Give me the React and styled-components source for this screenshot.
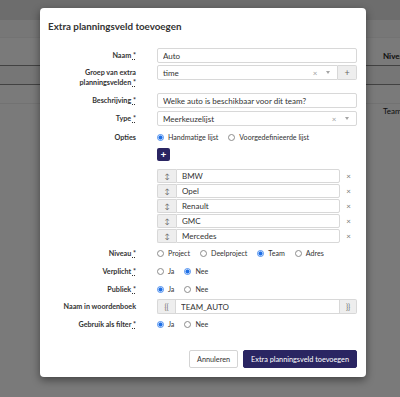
import React from 'react';
import styled, { createGlobalStyle } from 'styled-components';

const GlobalStyle = createGlobalStyle`
  html, body { margin: 0; padding: 0; }
  body {
    font-family: Lato, "Noto Sans", sans-serif;
    background: #fff;
    color: #333;
    width: 400px;
    height: 397px;
    overflow: hidden;
  }
  * { box-sizing: border-box; }
`;

const Page = styled.div`
  position: relative;
  width: 400px;
  height: 397px;
  overflow: hidden;
  background: #fff;
`;

const TopBar = styled.div`
  height: 20px;
  background: #e4e4e4;
`;

const BgRow = styled.div`
  display: grid;
  grid-template-columns: 383px 1fr;
  align-items: ${p => (p.$bottom ? 'end' : 'center')};
  padding-bottom: ${p => (p.$bottom ? 4 : 0)}px;
  height: ${p => p.$h}px;
  border-bottom: 1px solid ${p => p.$line};
  background: ${p => p.$bg || '#fff'};
  font-size: 8px;
  line-height: 10px;
  font-weight: ${p => (p.$bold ? 700 : 400)};
  color: #222;
  white-space: nowrap;
`;

const Backdrop = styled.div`
  position: absolute;
  inset: 0;
  background: rgba(0, 0, 0, 0.52);
`;

const Modal = styled.div`
  position: absolute;
  left: 40px;
  top: 8px;
  width: 326px;
  height: 369px;
  background: #fff;
  border-radius: 4px;
  box-shadow: 0 3px 9px rgba(0, 0, 0, 0.45);
  display: flex;
  flex-direction: column;
  padding: 0 9px 9px 8px;
`;

const Title = styled.h4`
  margin: 10px 0 14px;
  height: 16px;
  line-height: 16px;
  font-size: 9.8px;
  font-weight: 700;
  color: #333;
`;

const Form = styled.div`
  display: flex;
  flex-direction: column;
`;

const Row = styled.div`
  display: grid;
  grid-template-columns: 88px 200px;
  column-gap: 21px;
  align-items: start;
  margin-bottom: ${p => (p.$mb ?? 3)}px;
`;

const Label = styled.div`
  text-align: right;
  font-weight: 700;
  font-size: 7.2px;
  line-height: 10px;
  padding-top: ${p => (p.$pt ?? 2.5)}px;
  color: #333;
`;

const Req = styled.abbr`
  text-decoration: underline dotted;
  text-underline-offset: 1px;
  cursor: help;
`;

const Control = styled.div`
  display: flex;
  align-items: center;
  min-height: 15px;
  grid-column: 2;
`;

const TextInput = styled.input`
  height: ${p => (p.$h ?? 15)}px;
  width: 100%;
  flex: 1;
  min-width: 0;
  border: 1px solid #d8d8d8;
  border-radius: ${p => p.$radius ?? '2px'};
  padding: 0 5px;
  font-family: Lato, "Noto Sans", sans-serif;
  font-size: 8px;
  color: #333;
  background: #fff;
  outline: none;
`;

const SelectBox = styled.div`
  flex: 1;
  display: flex;
  align-items: center;
  height: 15px;
  border: 1px solid #d8d8d8;
  border-radius: ${p => (p.$joined ? '2px 0 0 2px' : '2px')};
  padding: 0 5px;
  font-size: 8px;
  color: #333;
`;

const SelectValue = styled.span`
  flex: 1;
`;

const Clear = styled.span`
  width: 8px;
  text-align: center;
  color: #a0a0a0;
  font-size: 8px;
  margin-right: 5px;
`;

const Caret = styled.span`
  width: 8px;
  display: flex;
  justify-content: center;
  &::after {
    content: '';
    border-top: 3px solid #a5a5a5;
    border-left: 2.5px solid transparent;
    border-right: 2.5px solid transparent;
  }
`;

const Addon = styled.div`
  width: ${p => p.$w}px;
  height: ${p => (p.$h ?? 15)}px;
  flex: none;
  display: flex;
  align-items: center;
  justify-content: center;
  background: #eeeeee;
  border: 1px solid #d8d8d8;
  ${p => (p.$side === 'left' ? 'border-right: none; border-radius: 2px 0 0 2px;' : 'border-left: none; border-radius: 0 2px 2px 0;')}
  color: #666;
  font-size: ${p => p.$fs ?? 8}px;
`;

const RadioGroup = styled.div`
  display: flex;
  align-items: center;
  height: 15px;
`;

const RadioOption = styled.label`
  display: flex;
  align-items: center;
  gap: 4px;
  margin-right: 10px;
  font-size: 7.1px;
  color: #333;
`;

const Radio = styled.input.attrs({ type: 'radio' })`
  appearance: none;
  -webkit-appearance: none;
  margin: 0;
  width: 7px;
  height: 7px;
  border-radius: 50%;
  border: 1px solid #8c8c8c;
  background: #fff;
  &:checked {
    border-color: #4d8ff0;
    background: radial-gradient(circle, #1f6fe5 0 1.8px, #d6e6fc 2.2px);
  }
`;

const AddButton = styled.button`
  width: 13px;
  height: 13px;
  padding: 0;
  border: none;
  border-radius: 2px;
  background: #2a2562;
  color: #fff;
  font-family: Lato, sans-serif;
  font-size: 10px;
  line-height: 13px;
  font-weight: 700;
`;

const List = styled.div`
  display: flex;
  flex-direction: column;
  gap: 1px;
  width: 100%;
`;

const ListRow = styled.div`
  display: flex;
  align-items: center;
  height: 14px;
`;

const Remove = styled.span`
  width: 17px;
  flex: none;
  text-align: center;
  font-size: 8px;
  color: #777;
`;

const Footer = styled.div`
  margin-top: auto;
  display: flex;
  justify-content: flex-end;
  gap: 5px;
`;

const Button = styled.button`
  height: 18px;
  padding: 0 7px;
  border-radius: 2px;
  border: 1px solid ${p => (p.$primary ? '#2a2562' : '#d4d4d4')};
  background: ${p => (p.$primary ? '#2a2562' : '#fff')};
  color: ${p => (p.$primary ? '#fff' : '#333')};
  font-family: Lato, "Noto Sans", sans-serif;
  font-size: 7.3px;
`;

const options = ['BMW', 'Opel', 'Renault', 'GMC', 'Mercedes'];

function RadioSet({ name, items, checked }) {
  return (
    <RadioGroup>
      {items.map(it => (
        <RadioOption key={it}>
          <Radio name={name} defaultChecked={it === checked} />
          {it}
        </RadioOption>
      ))}
    </RadioGroup>
  );
}

export default function App() {
  return (
    <Page>
      <GlobalStyle />
      <TopBar />
      <BgRow $h={18} $line="#f0f0f0" $bg="#f9f9f9" />
      <BgRow $h={28} $line="#8a8a8a" $bold $bottom>
        <span />
        <span>Niveau</span>
      </BgRow>
      <BgRow $h={19} $line="#8a8a8a" $bg="#f6f6f6" />
      <BgRow $h={19} $line="#eeeeee" />
      <BgRow $h={15} $line="#fff">
        <span />
        <span>Team</span>
      </BgRow>
      <Backdrop />
      <Modal role="dialog">
        <Title>Extra planningsveld toevoegen</Title>
        <Form>
          <Row $mb={2}>
            <Label>Naam <Req title="verplicht">*</Req></Label>
            <Control><TextInput readOnly value="Auto" /></Control>
          </Row>
          <Row $mb={5}>
            <Label $pt={3}>Groep van extra planningsvelden <Req title="verplicht">*</Req></Label>
            <Control>
              <SelectBox $joined>
                <SelectValue>time</SelectValue>
                <Clear>×</Clear>
                <Caret />
              </SelectBox>
              <Addon $w={19} $side="right" $fs={9}>+</Addon>
            </Control>
          </Row>
          <Row>
            <Label>Beschrijving <Req title="verplicht">*</Req></Label>
            <Control><TextInput readOnly value="Welke auto is beschikbaar voor dit team?" /></Control>
          </Row>
          <Row $mb={4}>
            <Label>Type <Req title="verplicht">*</Req></Label>
            <Control>
              <SelectBox>
                <SelectValue>Meerkeuzelijst</SelectValue>
                <Clear>×</Clear>
                <Caret />
              </SelectBox>
            </Control>
          </Row>
          <Row $mb={2}>
            <Label>Opties</Label>
            <Control>
              <RadioSet name="opties" items={['Handmatige lijst', 'Voorgedefinieerde lijst']} checked="Handmatige lijst" />
            </Control>
          </Row>
          <Row $mb={7}>
            <Control><AddButton>+</AddButton></Control>
          </Row>
          <Row $mb={3}>
            <Control>
              <List>
                {options.map(o => (
                  <ListRow key={o}>
                    <Addon $w={19} $h={14} $side="left" $fs={7}>↕</Addon>
                    <TextInput $h={14} $radius="0 2px 2px 0" readOnly value={o} />
                    <Remove>×</Remove>
                  </ListRow>
                ))}
              </List>
            </Control>
          </Row>
          <Row>
            <Label>Niveau <Req title="verplicht">*</Req></Label>
            <Control>
              <RadioSet name="niveau" items={['Project', 'Deelproject', 'Team', 'Adres']} checked="Team" />
            </Control>
          </Row>
          <Row>
            <Label>Verplicht <Req title="verplicht">*</Req></Label>
            <Control><RadioSet name="verplicht" items={['Ja', 'Nee']} checked="Nee" /></Control>
          </Row>
          <Row $mb={2}>
            <Label>Publiek <Req title="verplicht">*</Req></Label>
            <Control><RadioSet name="publiek" items={['Ja', 'Nee']} checked="Ja" /></Control>
          </Row>
          <Row>
            <Label>Naam in woordenboek</Label>
            <Control>
              <Addon $w={18} $side="left" $fs={7}>{'{{'}</Addon>
              <TextInput $radius="0" readOnly value="TEAM_AUTO" />
              <Addon $w={17} $side="right" $fs={7}>{'}}'}</Addon>
            </Control>
          </Row>
          <Row>
            <Label>Gebruik als filter <Req title="verplicht">*</Req></Label>
            <Control><RadioSet name="filter" items={['Ja', 'Nee']} checked="Ja" /></Control>
          </Row>
        </Form>
        <Footer>
          <Button>Annuleren</Button>
          <Button $primary>Extra planningsveld toevoegen</Button>
        </Footer>
      </Modal>
    </Page>
  );
}
